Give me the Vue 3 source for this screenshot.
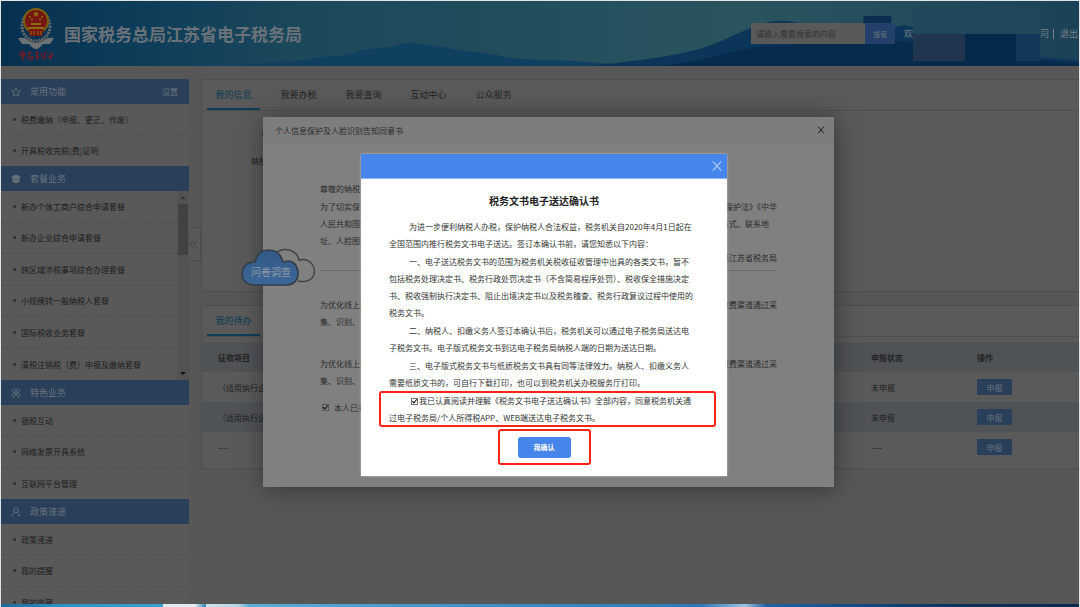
<template>
  <div class="page">
    <header class="banner">
      <svg class="banner-bg" viewBox="0 0 1080 65" preserveAspectRatio="none" aria-hidden="true">
        <path d="M225 65 C255 62 285 62 310 58 C325 54 340 57 355 51 C370 45 385 50 400 43 C415 40 430 45 445 46 C465 52 485 50 505 56 C530 60 560 58 600 62 L640 65 Z" fill="#10405f" />
        <path d="M590 65 C630 60 660 58 700 48 C725 40 740 30 765 22 C780 18 795 20 810 25 C850 28 880 30 905 24 C930 30 960 44 1000 50 C1040 58 1060 56 1080 60 L1080 65 Z" fill="#0c3659" />
        <path d="M660 65 C700 61 730 50 765 45 C820 42 860 40 900 40 C960 48 1000 56 1080 62 L1080 65 Z" fill="#062b4c" />
        <path d="M864 15 H892 V30 H864 Z" fill="#0a2e52" />
      </svg>
      <div class="brand">
        <svg class="emblem" viewBox="0 0 38 54" aria-hidden="true">
          <ellipse cx="19" cy="19" rx="14" ry="15" fill="none" stroke="#62686c" stroke-width="3" stroke-dasharray="2 1" />
          <path d="M1 31 Q10 30 19 36 Q28 30 37 31 L33 37 L26 37 Q22 42 19 42 Q16 42 12 37 L5 37 Z" fill="#6c7174" />
          <path d="M8 31 Q19 40 30 31" fill="none" stroke="#3d464b" stroke-width="1" />
          <circle cx="19" cy="14" r="13" fill="#7d600d" />
          <circle cx="19" cy="14" r="11" fill="#761612" />
          <path d="M19 4 L20 6 L22 6 L20.5 7.5 L21 10 L19 8.5 L17 10 L17.5 7.5 L16 6 L18 6 Z" fill="#8a6d0e" />
          <g fill="#8a6d0e">
            <circle cx="13" cy="10" r="1" />
            <circle cx="25" cy="10" r="1" />
            <circle cx="15" cy="12.5" r="1" />
            <circle cx="23" cy="12.5" r="1" />
          </g>
          <path d="M14 16 H24 V18 H14 Z M11 20 H27 V22 H11 Z" fill="#8a6d0e" />
          <path d="M11 23 H27 L25 29 H13 Z" fill="#761612" />
          <path d="M14 24 V28 M17 24 V28 M21 24 V28 M24 24 V28" fill="none" stroke="#8a6d0e" stroke-width="1" />
          <g fill="none" stroke="#7c1b22" stroke-width="1.2">
            <path d="M3 46 H8 V49 H3 Z M6 43 V54" />
            <path d="M11 47 L15 45 M11 50 H16 Q16 53 13 53 M13 45 L11 53" />
            <path d="M18 46 H22 M20 44 V53 M18 50 H23 M24 46 L26 52" />
            <path d="M27 47 L30 45 M28 46 V53 M31 47 H35 L33 53 M30 50 L36 49" />
          </g>
        </svg>
        <h1>国家税务总局江苏省电子税务局</h1>
      </div>
      <div class="banner-tools">
        <form class="search" @submit.prevent>
          <input type="text" v-model="keyword" aria-label="搜索内容" placeholder="请输入需要搜索的内容" />
          <button type="submit">搜索</button>
        </form>
        <span class="welcome">欢</span>
        <div class="mosaic" aria-hidden="true">
          <i class="m-top"></i>
          <i class="m-a"></i>
          <i class="m-b"></i>
          <i class="m-c"></i>
        </div>
        <span class="company">司</span>
        <span class="divider"></span>
        <a href="#" class="logout">退出</a>
      </div>
    </header>

    <div class="body">
      <nav class="sidebar">
        <section v-for="group in groups" :key="group.title">
          <h2 class="group-title">
            <svg viewBox="0 0 12 12" aria-hidden="true">
              <path v-if="group.icon === 'star'" d="M6 1 L7.5 4.4 L11.2 4.7 L8.4 7.1 L9.3 10.8 L6 8.9 L2.7 10.8 L3.6 7.1 L.8 4.7 L4.5 4.4 Z" />
              <g v-else-if="group.icon === 'layers'">
                <path class="solid" d="M6 1 L11 3.6 L6 6.2 L1 3.6 Z" />
                <path d="M1.5 5.6 L6 8 L10.5 5.6 M1.5 8 L6 10.4 L10.5 8" stroke-width="1.6" />
              </g>
              <g v-else-if="group.icon === 'clover'">
                <path d="M5.3 5.3 H3 A2 2 0 1 1 5.3 3 Z M6.7 5.3 V3 A2 2 0 1 1 9 5.3 Z M5.3 6.7 V9 A2 2 0 1 1 3 6.7 Z M6.7 6.7 H9 A2 2 0 1 1 6.7 9 Z" />
              </g>
              <g v-else>
                <circle cx="6" cy="4" r="2.8" />
                <path d="M1.2 11 Q1.6 7.6 4.6 6.6 M7.4 6.6 Q9.6 7.4 10.2 10 M8 10.4 H11" />
              </g>
            </svg>
            <span>{{ group.title }}</span>
            <a v-if="group.action" href="#" class="setting">{{ group.action }}</a>
          </h2>
          <div class="group-body">
            <ul :class="group.size">
              <li v-for="item in group.items" :key="item">
                <a href="#">{{ item }}</a>
              </li>
            </ul>
            <div v-if="group.scroll" class="scrollbar">
              <i class="arrow up"></i>
              <i class="thumb"></i>
              <i class="arrow down"></i>
            </div>
          </div>
        </section>
      </nav>

      <button class="collapse" type="button" aria-label="收起菜单">
        <svg viewBox="0 0 10 10"><path d="M5 1 L1 5 L5 9 M9 1 L5 5 L9 9" /></svg>
      </button>

      <main class="content">
        <section class="card info">
          <div class="tabs">
            <button
              v-for="tab in tabs"
              :key="tab"
              type="button"
              :class="{ active: tab === activeTab }"
              @click="activeTab = tab"
            >
              {{ tab }}
            </button>
          </div>
          <div class="taxpayer">
            <i class="mark"></i>
            <span>纳税人</span>
          </div>
        </section>

        <section class="card todo">
          <div class="tabs">
            <button type="button" class="active">我的待办</button>
          </div>
          <table>
            <colgroup>
              <col />
              <col class="col-status" />
              <col class="col-action" />
            </colgroup>
            <thead>
              <tr>
                <th>征收项目</th>
                <th>申报状态</th>
                <th>操作</th>
              </tr>
            </thead>
            <tbody>
              <tr v-for="(row, i) in rows" :key="i">
                <td>{{ row.name }}</td>
                <td>{{ row.status }}</td>
                <td><button type="button" class="declare">申报</button></td>
              </tr>
            </tbody>
          </table>
        </section>
      </main>
    </div>

    <div class="layer">
      <section class="consent" role="dialog" aria-label="个人信息保护及人脸识别告知同意书">
        <header>
          <span>个人信息保护及人脸识别告知同意书</span>
          <button type="button" aria-label="关闭">
            <svg viewBox="0 0 8 8"><path d="M1 0.5 L7 7.5 M7 0.5 L1 7.5" /></svg>
          </button>
        </header>
        <div class="consent-body">
          <p class="hello">尊敬的纳税人：</p>
          <p class="line"><span>为了切实保护</span><span>保护法》《中华</span></p>
          <p class="line short"><span>人民共和国个</span><span>方式、联系地</span></p>
          <p class="line"><span>址、人脸图像</span></p>
          <p class="line sign"><span></span><span>局江苏省税务局</span></p>
          <div v-for="n in 2" :key="n" class="notice">
            <p class="line"><span>为优化线上办</span><span>收费渠道通过采</span></p>
            <p class="line"><span>集、识别、</span></p>
          </div>
          <label class="agree"><input type="checkbox" v-model="consented" />本人已充分</label>
        </div>
      </section>
    </div>

    <a href="#" class="survey">
      <svg viewBox="0 0 76 40" aria-hidden="true">
        <defs>
          <linearGradient id="cloudFill" x1="0" y1="0" x2="0" y2="1">
            <stop offset="0" stop-color="#315885" />
            <stop offset="1" stop-color="#3d6797" />
          </linearGradient>
        </defs>
        <path d="M34 6 Q40 0 48 2 Q56 4 58 12 Q66 10 71 16 Q76 24 71 30 Q66 35 57 33" fill="#808080" stroke="#404247" stroke-width="1.4" />
        <path d="M13 37 Q1 36 1 25 Q2 14 14 14 Q16 2 28 2 Q39 2 42 14 Q54 10 57 23 Q58 36 46 37 Z" fill="url(#cloudFill)" stroke="#343d48" stroke-width="1.6" />
      </svg>
      <span>问卷调查</span>
    </a>

    <div class="layer top">
      <section class="confirm" role="dialog" aria-label="税务文书电子送达确认书">
        <header>
          <button type="button" aria-label="关闭">
            <svg viewBox="0 0 10 10"><path d="M0.8 0.5 L9.2 9.5 M9.2 0.5 L0.8 9.5" /></svg>
          </button>
        </header>
        <div class="confirm-body">
          <h2>税务文书电子送达确认书</h2>
          <p v-for="text in paragraphs" :key="text">{{ text }}</p>
          <p class="marked">
            <label><input type="checkbox" v-model="confirmed" />我已认真阅读并理解《税务文书电子送达确认书》全部内容，同意税务机关通过电子税务局/个人所得税APP、WEB端送达电子税务文书。</label>
          </p>
          <div class="submit">
            <button type="button">我确认</button>
          </div>
        </div>
      </section>
    </div>

    <div class="taskbar"></div>
  </div>
</template>

<script setup>
import { ref } from "vue";

const keyword = ref("");
const activeTab = ref("我的信息");
const consented = ref(true);
const confirmed = ref(true);

const tabs = ["我的信息", "我要办税", "我要查询", "互动中心", "公众服务"];

const groups = [
  {
    title: "常用功能",
    icon: "star",
    action: "设置",
    size: "two",
    items: ["税费缴纳（申报、更正、作废）", "开具税收完税(费)证明"],
  },
  {
    title: "套餐业务",
    icon: "layers",
    size: "six",
    scroll: true,
    items: [
      "新办个体工商户综合申请套餐",
      "新办企业综合申请套餐",
      "跨区域涉税事项综合办理套餐",
      "小规模转一般纳税人套餐",
      "国际税收业务套餐",
      "清税注销税（费）申报及缴纳套餐",
    ],
  },
  {
    title: "特色业务",
    icon: "clover",
    size: "three",
    items: ["银税互动", "网络发票开具系统", "互联网平台管理"],
  },
  {
    title: "政策速递",
    icon: "person",
    size: "three",
    items: ["政策速递", "我的提醒", "我的收藏"],
  },
];

const rows = [
  { name: "（适用执行企业", status: "未申报" },
  { name: "（适用执行企业", status: "未申报" },
  { name: "----", status: "----" },
];

const paragraphs = [
  "为进一步便利纳税人办税，保护纳税人合法权益，税务机关自2020年4月1日起在全国范围内推行税务文书电子送达。签订本确认书前，请您知悉以下内容：",
  "一、电子送达税务文书的范围为税务机关税收征收管理中出具的各类文书，暂不包括税务处理决定书、税务行政处罚决定书（不含简易程序处罚）、税收保全措施决定书、税收强制执行决定书、阻止出境决定书以及税务稽查、税务行政复议过程中使用的税务文书。",
  "二、纳税人、扣缴义务人签订本确认书后，税务机关可以通过电子税务局送达电子税务文书。电子版式税务文书到达电子税务局纳税人端的日期为送达日期。",
  "三、电子版式税务文书与纸质税务文书具有同等法律效力。纳税人、扣缴义务人需要纸质文书的，可自行下载打印，也可以到税务机关办税服务厅打印。",
];
</script>

<style>
body {
  background: #dfe4e6;
}
</style>

<style scoped>
.page {
  position: relative;
  box-sizing: border-box;
  height: 100vh;
  overflow: hidden;
  font-family: "Noto Sans CJK SC", sans-serif;
  font-size: 8px;
  color: #1c1c1c;
  background: #575757;
  border: solid #dfe4e6;
  border-width: 1px 1px 0;
}

h1,
h2,
p,
ul {
  margin: 0;
  padding: 0;
}

ul {
  list-style: none;
}

a {
  color: inherit;
  text-decoration: none;
}

button,
input {
  box-sizing: border-box;
  margin: 0;
  padding: 0;
  border: 0;
  font: inherit;
  color: inherit;
  background: none;
}

button {
  cursor: pointer;
}

svg {
  display: block;
}

/* banner */
.banner {
  position: relative;
  display: flex;
  align-items: center;
  justify-content: space-between;
  height: 65px;
  background: linear-gradient(90deg, #07304f 0%, #0d3c59 12%, #1c485b 28%, #234e5d 50%, #29545e 68%, #264f5d 80%, #1a4157 100%);
}

.banner-bg {
  position: absolute;
  inset: 0;
  width: 100%;
  height: 100%;
}

.brand {
  position: relative;
  display: flex;
  align-items: center;
  gap: 9px;
  padding-left: 16px;
}

.emblem {
  width: 38px;
  height: 54px;
}

h1 {
  font-size: 17px;
  font-weight: 700;
  line-height: 24px;
  color: #697278;
}

.banner-tools {
  position: relative;
  display: flex;
  align-items: center;
  height: 100%;
  color: #7a8186;
}

.search {
  display: flex;
}

.search input {
  width: 114px;
  height: 21px;
  padding: 0 5px;
  background: #595959;
  color: #1c1c1c;
}

.search input::placeholder {
  color: #333;
  opacity: 1;
}

.search button {
  width: 30px;
  height: 21px;
  background: #24406a;
  color: #69727e;
  font-size: 7px;
}

.welcome {
  width: 9px;
  margin-left: 9px;
  font-size: 9px;
}

.mosaic {
  display: grid;
  grid-template-columns: 52px 51px 24px;
  grid-template-rows: 28px 27px;
}

.m-top {
  grid-column: 1 / 4;
  background: #21475a;
}

.m-a {
  background: #22354f;
}

.m-b {
  background: #04294a;
}

.m-c {
  background: #11375a;
}

.company {
  font-size: 9px;
}

.divider {
  width: 1px;
  height: 10px;
  margin: 0 6px 0 4px;
  background: #7a8186;
}

.logout {
  padding-right: 1px;
  font-size: 9px;
}

/* page body */
.body {
  display: flex;
  align-items: flex-start;
  padding-top: 13px;
}

.sidebar {
  flex: none;
  width: 188px;
  background: #595959;
}

.group-title {
  display: flex;
  align-items: center;
  height: 25px;
  padding: 0 11px 0 10px;
  background: #293f5a;
  color: #69727d;
  font-size: 9px;
  font-weight: 400;
}

.group-title svg {
  width: 10px;
  height: 10px;
  margin-right: 9px;
  fill: none;
  stroke: #69727d;
  stroke-width: 1;
}

.group-title .solid {
  fill: #69727d;
}

.setting {
  margin-left: auto;
  font-size: 8px;
}

.group-body {
  display: flex;
}

.group-body ul {
  flex: 1;
  display: grid;
  grid-auto-rows: 1fr;
}

.two {
  height: 62px;
}

.three {
  height: 94px;
}

.six {
  height: 189px;
}

.group-body li {
  display: flex;
  align-items: center;
  padding-left: 12px;
  border-bottom: 1px dashed #4f4f4f;
  white-space: nowrap;
}

.group-body li:last-child {
  border-bottom: 0;
}

.group-body li::before {
  content: "";
  width: 3px;
  height: 3px;
  margin-right: 5px;
  border-radius: 1px;
  background: #363636;
}

.scrollbar {
  display: flex;
  flex-direction: column;
  align-items: center;
  width: 12px;
  background: #535353;
}

.arrow {
  margin: 5px 0;
  border: 3px solid transparent;
}

.up {
  margin-top: 5px;
  border-bottom-color: #333;
  border-top-width: 0;
}

.down {
  margin-top: auto;
  border-top: 3px solid #111;
  border-bottom-width: 0;
}

.thumb {
  width: 10px;
  height: 51px;
  background: #424242;
}

.collapse {
  flex: none;
  width: 12px;
  height: 34px;
  margin-top: 148px;
  border: 1px solid #4d4d4d;
  border-left: 0;
  border-radius: 0 3px 0 0;
  background: #595959;
}

.collapse svg {
  width: 9px;
  height: 9px;
  fill: none;
  stroke: #3c3c3c;
  stroke-width: 1;
}

.content {
  flex: 1;
  display: flex;
  flex-direction: column;
  gap: 13px;
  min-width: 0;
}

.card {
  border: 1px solid #4e4e4e;
  border-right: 0;
  background: #5a5a5a;
}

.info {
  box-sizing: border-box;
  height: 213px;
}

.tabs {
  display: flex;
  gap: 12px;
  height: 30px;
  padding-left: 5px;
  border-bottom: 1px solid #4f4f4f;
}

.tabs button {
  width: 53px;
  height: 30px;
  border-bottom: 2px solid transparent;
  font-size: 9px;
  color: #252525;
}

.tabs .active {
  color: #0d3b54;
  border-bottom-color: #103e58;
}

.taxpayer {
  display: flex;
  flex-direction: column;
  gap: 16px;
  padding: 18px 0 0 49px;
}

.mark {
  width: 10px;
  height: 10px;
  margin-left: 11px;
  border-radius: 5px;
  background: #24365c;
}

/* to-do table */
table {
  width: 100%;
  margin-top: 5px;
  margin-bottom: 6px;
  table-layout: fixed;
  border-collapse: collapse;
}

.col-status {
  width: 106px;
}

.col-action {
  width: 118px;
}

th,
td {
  height: 30px;
  padding: 0 0 0 16px;
  text-align: left;
}

th {
  font-weight: 700;
  color: #242424;
}

thead tr,
tbody tr:nth-child(2) {
  background: #505356;
}

.declare {
  display: block;
  width: 35px;
  height: 16px;
  border-radius: 1px;
  background: #293f5a;
  color: #69727d;
}

/* dialogs */
.layer {
  position: absolute;
  inset: 0;
  display: flex;
  align-items: flex-start;
  justify-content: center;
  padding: 116px 0 0 17px;
}

.top {
  padding: 153px 0 0 8px;
}

.consent {
  width: 571px;
  padding-bottom: 71px;
  background: #808080;
  color: #2b2b2b;
  box-shadow: 1px 1px 24px rgba(0, 0, 0, 0.4);
}

.consent header {
  display: flex;
  align-items: center;
  justify-content: space-between;
  height: 26px;
  padding: 0 9px 0 12px;
  border-bottom: 1px solid #797979;
  background: #7d7d7d;
}

.consent header svg {
  width: 8px;
  height: 8px;
  fill: none;
  stroke: #222;
  stroke-width: 1;
}

.consent-body {
  padding: 36px 57px 0;
  line-height: 17px;
}

.hello {
  margin-bottom: 1px;
}

.line {
  display: flex;
  justify-content: space-between;
}

.short {
  padding-right: 8px;
}

.sign {
  padding-bottom: 4px;
  border-bottom: 1px solid #6a6a6a;
}

.notice {
  margin: 25px 0;
}

.notice:last-of-type {
  margin-bottom: 10px;
}

.agree {
  display: flex;
  align-items: center;
  gap: 5px;
  padding-left: 2px;
}

input[type="checkbox"] {
  position: relative;
  width: 7px;
  height: 7px;
  appearance: none;
  border: 1px solid #777;
  background: #fff;
}

input[type="checkbox"]:checked::after {
  content: "";
  position: absolute;
  left: 1px;
  top: -1px;
  width: 2px;
  height: 4px;
  border: solid #111;
  border-width: 0 1px 1px 0;
  transform: rotate(40deg);
}

.agree input[type="checkbox"] {
  border-color: #555;
  background: #808080;
}

.survey {
  position: absolute;
  left: 240px;
  top: 247px;
  width: 76px;
}

.survey span {
  position: absolute;
  left: 10px;
  top: 16px;
  font-size: 10px;
  line-height: 16px;
  color: #8f9aa6;
}

.confirm {
  width: 366px;
  background: #fff;
  color: #333;
  box-shadow: 0 0 2px #c8c8c8;
}

.confirm header {
  display: flex;
  align-items: center;
  justify-content: flex-end;
  height: 24px;
  padding-right: 5px;
  border-bottom: 1px solid #8fb5f3;
  background: #4685ea;
}

.confirm header svg {
  width: 10px;
  height: 10px;
  fill: none;
  stroke: #a3c2f5;
  stroke-width: 1.3;
}

.confirm-body {
  padding: 13px 28px 11px;
  line-height: 17px;
}

.confirm-body h2 {
  margin-bottom: 9px;
  font-size: 10px;
  line-height: 17px;
  text-align: center;
  color: #222;
}

.confirm-body p {
  margin-bottom: 1px;
  padding-right: 4px;
  text-indent: 20px;
}

.marked {
  position: relative;
}

.marked::before {
  content: "";
  position: absolute;
  inset: -1px -17px -1px -10px;
  border: 2px solid #fb2419;
  border-radius: 3px;
  pointer-events: none;
}

.marked input[type="checkbox"] {
  margin: 0 1px 0 2px;
  vertical-align: middle;
}

.submit {
  width: fit-content;
  margin: 3px auto 0;
  padding: 6px 18px 5px;
  border: 2px solid #fb2419;
  border-radius: 3px;
}

.submit button {
  display: block;
  width: 53px;
  height: 21px;
  border-radius: 3px;
  background: #4685ea;
  color: #fff;
  font-size: 7px;
  font-weight: 700;
}

.taskbar {
  position: absolute;
  left: 0;
  right: 0;
  bottom: 0;
  height: 3px;
  background: linear-gradient(90deg, #1c6a9e 0, #2d93c4 6%, #3ba0cf 15%, #e3ebee 15%, #e3ebee 18%, #2f84ad 19%, #cfe0e8 19%, #b6d7e6 22%, #58afd6 23%, #3d8fc5 45%, #2a78b8 65%, #9cc3e2 69%, #1f62a4 71%, #134a80 80%, #0b2f57 90%, #0a2a50 100%);
}
</style>
